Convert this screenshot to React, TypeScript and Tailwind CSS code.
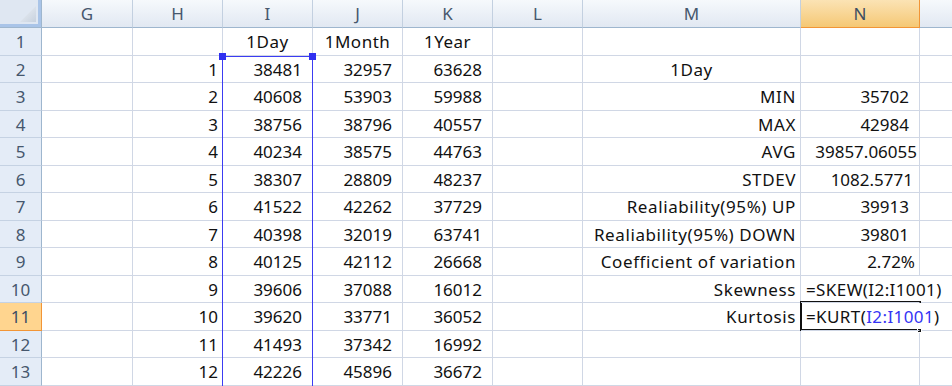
import React from "react";

type Align = "l" | "c" | "r";

const colW = [
  "w-[91px]",
  "w-[90px]",
  "w-[90px]",
  "w-[90px]",
  "w-[90px]",
  "w-[90px]",
  "w-[218px]",
  "w-[119px]",
];
const cols = ["G", "H", "I", "J", "K", "L", "M", "N"];

const rowH = [
  "h-[28px]",
  "h-[27px]",
  "h-[28px]",
  "h-[27px]",
  "h-[28px]",
  "h-[27px]",
  "h-[28px]",
  "h-[27px]",
  "h-[28px]",
  "h-[27px]",
  "h-[28px]",
  "h-[27px]",
  "h-[28px]",
];

type Row = {
  h?: string;
  i?: string;
  j?: string;
  k?: string;
  m?: string;
  n?: React.ReactNode;
  nPad?: string;
  ijkCenter?: boolean;
  mCenter?: boolean;
  nLeft?: boolean;
};

const rows: Row[] = [
  { i: "1Day", j: "1Month", k: "1Year", ijkCenter: true },
  { h: "1", i: "38481", j: "32957", k: "63628", m: "1Day", mCenter: true },
  { h: "2", i: "40608", j: "53903", k: "59988", m: "MIN", n: "35702" },
  { h: "3", i: "38756", j: "38796", k: "40557", m: "MAX", n: "42984" },
  { h: "4", i: "40234", j: "38575", k: "44763", m: "AVG", n: "39857.06055", nPad: "pr-[2px]" },
  { h: "5", i: "38307", j: "28809", k: "48237", m: "STDEV", n: "1082.5771", nPad: "pr-[6px]" },
  { h: "6", i: "41522", j: "42262", k: "37729", m: "Realiability(95%) UP", n: "39913" },
  { h: "7", i: "40398", j: "32019", k: "63741", m: "Realiability(95%) DOWN", n: "39801" },
  { h: "8", i: "40125", j: "42112", k: "26668", m: "Coefficient of variation", n: "2.72%", nPad: "pr-[4px]" },
  { h: "9", i: "39606", j: "37088", k: "16012", m: "Skewness", n: "=SKEW(I2:I1001)", nLeft: true },
  {
    h: "10",
    i: "39620",
    j: "33771",
    k: "36052",
    m: "Kurtosis",
    n: (
      <>
        =KURT(<span className="text-[#3434f4]">I2:I1001</span>)
      </>
    ),
    nLeft: true,
  },
  { h: "11", i: "41493", j: "37342", k: "16992" },
  { h: "12", i: "42226", j: "45896", k: "36672" },
];

function Cell({
  w,
  align,
  pad,
  noRight,
  extra,
  children,
}: {
  w: string;
  align: Align;
  pad: string;
  noRight?: boolean;
  extra?: string;
  children?: React.ReactNode;
}) {
  const just =
    align === "l" ? "justify-start" : align === "c" ? "justify-center" : "justify-end";
  return (
    <div
      className={`${w} shrink-0 h-full flex items-center ${just} ${pad} ${extra ?? ""} border-b border-[#d0d7e5] ${
        noRight ? "border-r border-r-transparent overflow-visible relative z-10" : "border-r overflow-hidden"
      } whitespace-nowrap`}
    >
      {children}
    </div>
  );
}

export default function App() {
  return (
    <div className="relative w-[952px] h-[386px] overflow-hidden bg-white font-['Noto_Sans',sans-serif] text-[17px] leading-none text-[#111]">
      {/* header row */}
      <div className="flex h-[28px]">
        <div className="w-[42px] shrink-0 h-full border-r border-b border-[#9eb6ce] bg-[#dfe7f2] flex">
          <div className="flex-1 flex items-end justify-end border-r-[3px] border-b-[3px] border-[#a9c4e8] pr-[1px] pb-[1px]">
            <svg width="18" height="18" viewBox="0 0 18 18">
              <defs>
                <linearGradient id="tri" x1="0" y1="0" x2="1" y2="1">
                  <stop offset="0" stopColor="#eef2f7" />
                  <stop offset="1" stopColor="#c7d1de" />
                </linearGradient>
              </defs>
              <polygon points="17,1 17,17 1,17" fill="url(#tri)" />
            </svg>
          </div>
        </div>
        {cols.map((c, idx) => {
          const sel = c === "N";
          return (
            <div
              key={c}
              className={`${colW[idx]} shrink-0 h-full flex items-center justify-center border-b ${
                sel
                  ? "bg-gradient-to-b from-[#fbe3b4] to-[#f5c874] border-[#f29536] border-r text-[#3d4e63]"
                  : "bg-gradient-to-b from-[#f6f9fc] to-[#e1e8f2] border-b-[#9eb6ce] border-r border-r-[#c3d0e0] text-[#46576d]"
              }`}
            >
              {c}
            </div>
          );
        })}
        <div className="flex-1 h-full bg-gradient-to-b from-[#f6f9fc] to-[#e1e8f2] border-b border-[#9eb6ce]" />
      </div>

      {rows.map((r, ri) => {
        const num = ri + 1;
        const sel = num === 11;
        const ijkAlign: Align = r.ijkCenter ? "c" : "r";
        const ijkPad = r.ijkCenter ? "" : "pr-[10px]";
        const ijkExtra = r.ijkCenter ? "tracking-[0.5px]" : "";
        return (
          <div key={ri} className={`flex ${rowH[ri]}`}>
            <div
              className={`w-[42px] shrink-0 h-full flex items-center justify-center border-r border-b ${
                sel
                  ? "bg-[#ffd58f] border-[#f29536] text-[#3d4e63]"
                  : "bg-[#e4ecf7] border-r-[#9eb6ce] border-b-[#c5d2e3] text-[#46576d]"
              }`}
            >
              {num}
            </div>
            <Cell w={colW[0]} align="r" pad="" />
            <Cell w={colW[1]} align="r" pad="pr-[4px]">
              {r.h}
            </Cell>
            <Cell w={colW[2]} align={ijkAlign} pad={ijkPad} extra={ijkExtra}>
              {r.i}
            </Cell>
            <Cell w={colW[3]} align={ijkAlign} pad={ijkPad} extra={ijkExtra}>
              {r.j}
            </Cell>
            <Cell w={colW[4]} align={ijkAlign} pad={ijkPad} extra={ijkExtra}>
              {r.k}
            </Cell>
            <Cell w={colW[5]} align="r" pad="" />
            <Cell
              w={colW[6]}
              align={r.mCenter ? "c" : "r"}
              pad={r.mCenter ? "" : "pr-[4px]"}
              extra="tracking-[0.6px]"
            >
              {r.m}
            </Cell>
            <Cell
              w={colW[7]}
              align={r.nLeft ? "l" : "r"}
              pad={r.nLeft ? "pl-[5px]" : r.nPad ?? "pr-[10px]"}
              noRight={r.nLeft}
              extra={r.nLeft ? "tracking-[0.4px]" : ""}
            >
              {r.n}
            </Cell>
            <div className="flex-1 h-full border-b border-[#d0d7e5]" />
          </div>
        );
      })}

      {/* range highlight I2:I... */}
      <div className="absolute left-[222px] top-[56px] w-[91px] h-[340px] border border-b-0 border-[#3c3cf2] pointer-events-none" />
      <div className="absolute left-[219px] top-[53px] w-[7px] h-[7px] bg-[#3030f0]" />
      <div className="absolute left-[309px] top-[53px] w-[7px] h-[7px] bg-[#3030f0]" />

      {/* active cell N11 */}
      <div className="absolute left-[800px] top-[301px] w-[121px] h-[2px] bg-[#111]" />
      <div className="absolute left-[800px] top-[301px] w-[2px] h-[30px] bg-[#111]" />
      <div className="absolute left-[800px] top-[329px] w-[118px] h-[2px] bg-[#111]" />
      <div className="absolute left-[917px] top-[328px] w-[5px] h-[5px] bg-[#111] border border-white" />
    </div>
  );
}
